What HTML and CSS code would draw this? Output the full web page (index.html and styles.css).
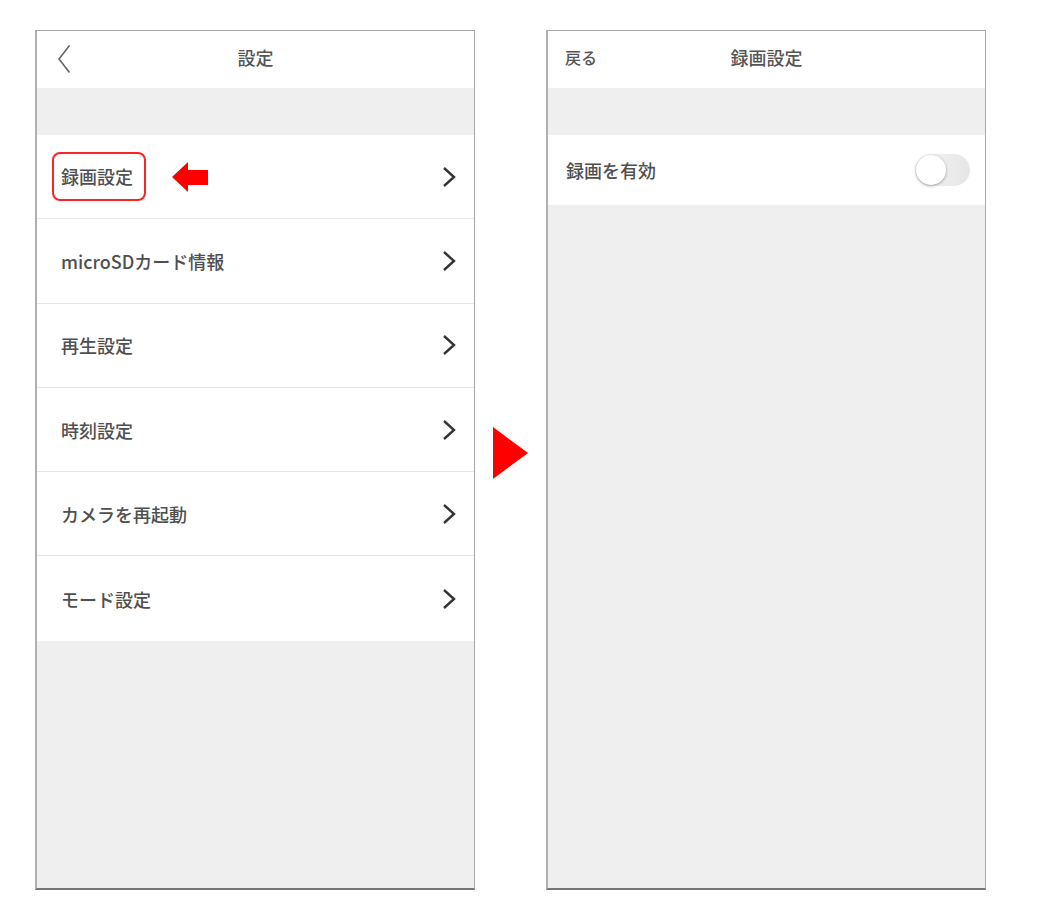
FILE: index.html
```html
<!DOCTYPE html>
<html lang="ja">
<head>
    <meta charset="UTF-8">
    <title>録画設定</title>
    <link rel="stylesheet" href="styles.css">
</head>
<body>
<div class="stage">
    <div class="phone">
        <div class="bar">
            <span class="bar-left">
                <svg class="back" width="14" height="30" viewBox="0 0 14 30"><polyline points="12.5,1.5 2,15 12.5,28.5" fill="none" stroke="#666" stroke-width="1.6"/></svg>
            </span>
            <span class="bar-title">設定</span>
            <span></span>
        </div>
        <div class="gap"></div>
        <ul class="menu">
            <li>
                <span class="label"><span class="mark">録画設定</span>
                    <svg class="point" width="36" height="30" viewBox="0 0 36 30"><polygon points="0,15 16,0 16,8 36,8 36,23 16,23 16,30" fill="#f00"/></svg>
                </span>
                <svg class="more" width="14" height="22" viewBox="0 0 14 22"><polyline points="2,2 12,11 2,20" fill="none" stroke="#333" stroke-width="2.4"/></svg>
            </li>
            <li>
                <span class="label">microSDカード情報</span>
                <svg class="more" width="14" height="22" viewBox="0 0 14 22"><polyline points="2,2 12,11 2,20" fill="none" stroke="#333" stroke-width="2.4"/></svg>
            </li>
            <li>
                <span class="label">再生設定</span>
                <svg class="more" width="14" height="22" viewBox="0 0 14 22"><polyline points="2,2 12,11 2,20" fill="none" stroke="#333" stroke-width="2.4"/></svg>
            </li>
            <li>
                <span class="label">時刻設定</span>
                <svg class="more" width="14" height="22" viewBox="0 0 14 22"><polyline points="2,2 12,11 2,20" fill="none" stroke="#333" stroke-width="2.4"/></svg>
            </li>
            <li>
                <span class="label">カメラを再起動</span>
                <svg class="more" width="14" height="22" viewBox="0 0 14 22"><polyline points="2,2 12,11 2,20" fill="none" stroke="#333" stroke-width="2.4"/></svg>
            </li>
            <li>
                <span class="label">モード設定</span>
                <svg class="more" width="14" height="22" viewBox="0 0 14 22"><polyline points="2,2 12,11 2,20" fill="none" stroke="#333" stroke-width="2.4"/></svg>
            </li>
        </ul>
    </div>

    <div class="next"></div>

    <div class="phone phone-b">
        <div class="bar">
            <span class="bar-left back-text">戻る</span>
            <span class="bar-title">録画設定</span>
            <span></span>
        </div>
        <div class="gap"></div>
        <ul class="menu">
            <li class="switch-row">
                <span class="label">録画を有効</span>
                <span class="switch"><i></i></span>
            </li>
        </ul>
    </div>
</div>
</body>
</html>
```

FILE: styles.css
```css
*{box-sizing:border-box;}
body,ul,li{margin:0;padding:0;}
body{background:#fff;color:#555;font-family:"Noto Sans CJK JP","Noto Sans",sans-serif;}
ul{list-style-type:none;}

.stage{display:flex;align-items:flex-start;padding:30px 0 0 35px;}
.phone{width:440px;height:860px;border:1px solid #a8a8a8;border-left:2px solid #b0b0b0;border-bottom:2px solid #777;background:#efefef;display:flex;flex-direction:column;}

.bar{height:57px;padding-bottom:5px;background:#fff;display:grid;grid-template-columns:1fr auto 1fr;align-items:center;}
.bar-left{padding-left:20px;display:flex;align-items:center;}
.bar-title{font-size:18px;font-weight:500;color:#555;}
.back{display:block;margin-top:3px;}
.back-text{padding-left:17px;font-size:16px;font-weight:500;color:#555;}

.gap{height:47px;}

.menu{background:#fff;}
.menu li{height:84.3px;display:flex;align-items:center;justify-content:space-between;padding:0 18px 0 24px;border-bottom:1px solid #e6e6e6;}
.menu li:last-child{border-bottom:0;}
.label{font-size:18px;font-weight:500;color:#4f4f4f;display:flex;align-items:center;}
.more{display:block;}

.mark{border:2px solid #f22;border-radius:8px;padding:9px 11px 10px 7px;margin-left:-9px;}
.point{margin-left:26px;display:block;}

.next{width:0;height:0;margin:397px 18px 0 18px;border-top:26px solid transparent;border-bottom:26px solid transparent;border-left:35px solid #f00;}

.phone-b .menu li{height:70px;padding:0 15px 0 18px;}
.switch{width:55px;height:32px;border-radius:16px;background:linear-gradient(90deg,#f4f4f4,#e6e6e6);position:relative;display:block;}
.switch i{position:absolute;left:1px;top:1px;width:30px;height:30px;border-radius:50%;background:#fff;box-shadow:0 1px 3px rgba(0,0,0,.35);}
```
